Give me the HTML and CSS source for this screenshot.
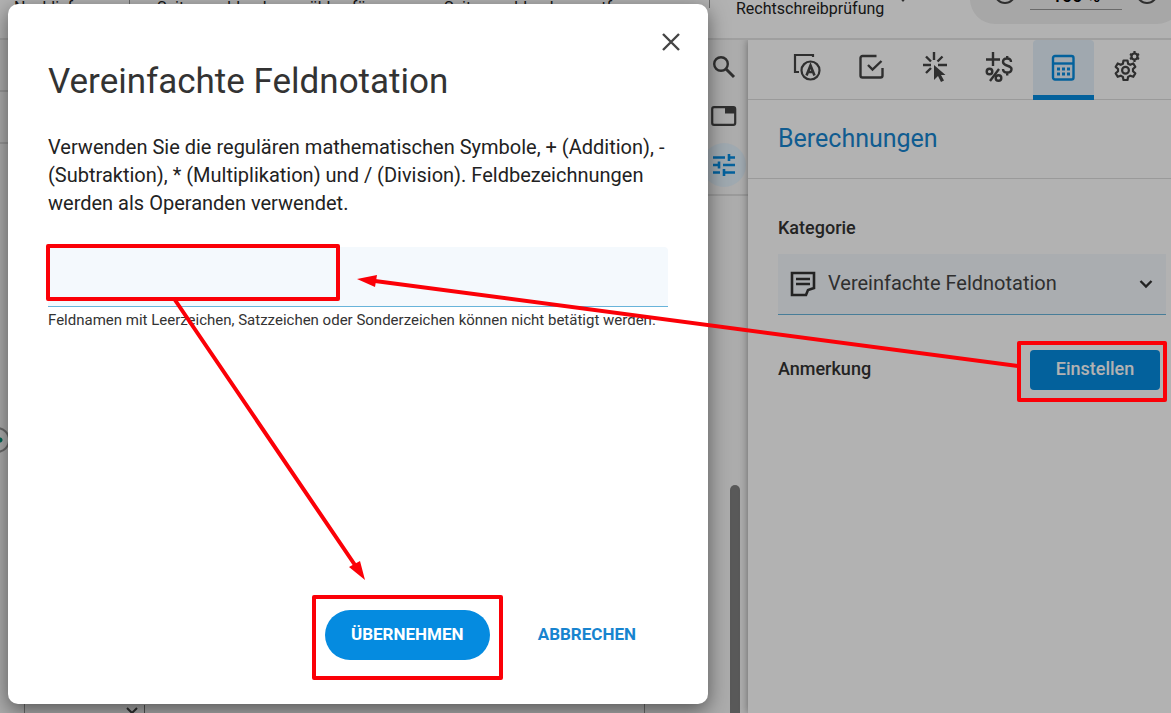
FILE: index.html
```
<!DOCTYPE html>
<html lang="de">
<head>
    <meta charset="utf-8">
    <title>Vereinfachte Feldnotation</title>
    <link rel="stylesheet" href="styles.css">
</head>
<body>
    <div class="app">
        <header class="toolbar">
            <a class="tool" href="#">Nachliefern</a>
            <span class="divider"></span>
            <a class="tool tool-wide" href="#">Seitenausblendung wählen für</a>
            <a class="tool tool-wide" href="#">Seitenausblendung entfernen</a>
            <span class="divider divider-short"></span>
            <a class="tool spelling" href="#">Rechtschreibprüfung</a>
            <svg class="caret" width="10" height="6" viewBox="0 0 10 6"><path d="M0 0h10L5 6z" fill="#444"/></svg>
            <div class="zoom">
                <button class="zoom-button" aria-label="Verkleinern"></button>
                <input class="zoom-value" type="text" value="100 %" aria-label="Zoom">
                <button class="zoom-button" aria-label="Vergrößern"></button>
            </div>
        </header>

        <div class="workspace">
            <main class="canvas">
                <div class="ruler"></div>
                <div class="ruler"></div>
                <div class="stage">
                    <span class="handle"></span>
                    <div class="sheet">
                        <div class="sheet-field">
                            <svg width="12" height="8" viewBox="0 0 12 8"><path d="M1 1l5 5 5-5" fill="none" stroke="#444" stroke-width="2"/></svg>
                        </div>
                    </div>
                </div>
            </main>

            <aside class="side">
                <nav class="rail">
                    <button class="rail-button" aria-label="Suchen">
                        <svg width="24" height="24" viewBox="0 0 24 24" fill="none" stroke="currentColor" stroke-width="2.4"><circle cx="9" cy="9" r="6.8"/><path d="M14 14l8 8" stroke-width="3"/></svg>
                    </button>
                    <button class="rail-button" aria-label="Seiten">
                        <svg width="26" height="20" viewBox="0 0 26 20"><rect x="1.2" y="1.2" width="23" height="17.6" rx="1.8" fill="none" stroke="currentColor" stroke-width="2.2"/><path d="M14 1h10v6.500H14z" fill="currentColor"/></svg>
                    </button>
                    <button class="rail-button active" aria-label="Eigenschaften">
                        <svg width="24" height="24" viewBox="0 0 24 24" fill="none" stroke="currentColor" stroke-width="2.600"><path d="M1 4.500h12M17 4.500h6M17 1v7M1 12h6M7 8.500v7M11 12h12M1 19.500h7M12 19.500h11M12 16v7"/></svg>
                    </button>
                </nav>
                <div class="scroll-thumb"></div>
            </aside>

            <section class="panel">
                <nav class="tabs">
                    <button class="tab" aria-label="Beschriftung">
                        <svg width="28" height="28" viewBox="0 0 28 28" fill="none" stroke="currentColor" stroke-width="2.200"><path d="M20 4V2H2v17h4"/><circle cx="17.500" cy="17.500" r="9"/><path d="M13.500 22.500l4-10 4 10M15 19h5" stroke-width="2.600"/></svg>
                    </button>
                    <button class="tab" aria-label="Validierung">
                        <svg width="28" height="28" viewBox="0 0 28 28" fill="none" stroke="currentColor" stroke-width="2.400"><path d="M19.500 3H5.500a2 2 0 0 0-2 2v17.500a2 2 0 0 0 2 2h18a2 2 0 0 0 2-2V15"/><path d="M11 12l4.500 4.500L24.500 8"/></svg>
                    </button>
                    <button class="tab" aria-label="Aktionen">
                        <svg width="28" height="32" viewBox="0 0 28 32" fill="none" stroke="currentColor" stroke-width="2.400"><path d="M13 1v8M2 14h8M17 14h9M5 5.500l5 5M21.500 5.500l-5 5M5 22l5-5"/><path d="M13 14l0 15 4-4 3 6 3-1.500-3-5.500h4.500z" fill="currentColor" stroke="none"/></svg>
                    </button>
                    <button class="tab" aria-label="Format">
                        <svg width="28" height="32" viewBox="0 0 28 32" fill="none" stroke="currentColor" stroke-width="2.400"><path d="M8 1v14M1 8.500h14"/><circle cx="4.500" cy="20.500" r="2.800"/><circle cx="13.500" cy="27" r="2.800"/><path d="M14 18L5 30"/><path d="M26 11c0-2.500-1.500-3.500-4-3.500s-4 1.200-4 3.500c0 4.500 8.500 3 8.500 7 0 2.200-1.700 3.500-4.200 3.500-2.800 0-4.300-1.300-4.300-3.500M22.200 5v3M22.200 21v3.500"/></svg>
                    </button>
                    <button class="tab active" aria-label="Berechnungen">
                        <svg width="24" height="28" viewBox="0 0 24 28" fill="none" stroke="currentColor" stroke-width="2.400"><rect x="2" y="2" width="20.500" height="23.500" rx="2"/><path d="M2 9.500h20"/><path d="M6 15h3M11 15h3M16 15h3M6 20h3M11 20h3M16 20h3" stroke-width="3"/></svg>
                    </button>
                    <button class="tab" aria-label="Einstellungen">
                        <svg width="28" height="32" viewBox="0 0 28 32" fill="none" stroke="currentColor" stroke-width="2.200" stroke-linejoin="round"><path d="M10.500 9.500h4l.6 3.200 2.200 1.100 3-1.300 2 3.400-2.300 2.100v2.300l2.300 2.100-2 3.400-3-1.100-2.200 1.200-.6 3.100h-4l-.6-3.100-2.200-1.200-3 1.100-2-3.400L5 20.300V18l-2.300-2.100 2-3.400 3 1.300 2.200-1.100z"/><circle cx="12.500" cy="19.200" r="3.400"/><circle cx="21.500" cy="5.500" r="3"/><path d="M21.500 0v2.500M21.500 8.500V11M17 3l2 1.200M24 6.800l2 1.200M17 8l2-1.200M24 4.200L26 3"/></svg>
                    </button>
                </nav>

                <h2 class="panel-title">Berechnungen</h2>

                <form class="panel-form">
                    <label class="label" for="category">Kategorie</label>
                    <div class="select-box">
                        <svg width="26" height="26" viewBox="0 0 26 26" fill="none" stroke="currentColor" stroke-width="2.600"><path d="M2 2h22v15l-6 2-2 5H2zM6 8h14M6 13h14"/></svg>
                        <select class="select" id="category">
                            <option>Vereinfachte Feldnotation</option>
                        </select>
                        <svg width="14" height="10" viewBox="0 0 14 10" fill="none" stroke="currentColor" stroke-width="2.400"><path d="M1.500 2L7 7.500 12.500 2"/></svg>
                    </div>
                    <div class="note-row">
                        <label class="label" for="set">Anmerkung</label>
                        <button class="set-button" id="set" type="button">Einstellen</button>
                    </div>
                </form>
            </section>
        </div>
    </div>

    <div class="backdrop"></div>

    <div class="modal" role="dialog" aria-labelledby="modal-title">
        <button class="close" aria-label="Schließen">
            <svg width="18" height="18" viewBox="0 0 18 18"><path d="M1 1l16 16M17 1L1 17" fill="none" stroke="#444" stroke-width="2.400"/></svg>
        </button>
        <h1 class="modal-title" id="modal-title">Vereinfachte Feldnotation</h1>
        <label class="modal-text" for="notation">Verwenden Sie die regulären mathematischen Symbole, + (Addition), - (Subtraktion), * (Multiplikation) und / (Division). Feldbezeichnungen werden als Operanden verwendet.</label>
        <input class="notation" id="notation" type="text">
        <p class="hint">Feldnamen mit Leerzeichen, Satzzeichen oder Sonderzeichen können nicht betätigt werden.</p>
        <div class="modal-actions">
            <button class="apply">ÜBERNEHMEN</button>
            <button class="cancel">ABBRECHEN</button>
        </div>
    </div>

    <!-- tutorial markers and arrows -->
    <svg class="marks" width="1171" height="713" viewBox="0 0 1171 713">
        <g fill="none" stroke="#fb0007" stroke-width="4" stroke-linejoin="round">
            <rect x="48" y="246" width="290" height="53"/>
            <rect x="314" y="597" width="187" height="81"/>
            <rect x="1019" y="343" width="146" height="57"/>
            <path d="M1018 366L375 281M175 300L357 568"/>
        </g>
        <path d="M357 279L377 275 375 287zM365 580L349 567 360 561z" fill="#fb0007"/>
    </svg>
</body>
</html>
```

FILE: styles.css
```
* {
    box-sizing: border-box;
}
body {
    margin: 0;
    font-family: Roboto, "Liberation Sans", sans-serif;
    font-size: 16px;
    color: #333;
    background-color: #fff;
    overflow: hidden;
}
button {
    padding: 0;
    border: none;
    background: none;
    font-family: inherit;
    color: inherit;
    cursor: pointer;
}
.app {
    display: flex;
    flex-direction: column;
    height: 100vh;
}

/* top toolbar */
.toolbar {
    display: flex;
    align-items: flex-end;
    height: 40px;
    padding: 0 0 14px 14px;
    border-bottom: 2px solid #e4e4e4;
    overflow: hidden;
}
.tool {
    flex: none;
    width: 115px;
    line-height: 24px;
    padding-bottom: 4px;
    white-space: nowrap;
    font-size: 16px;
    color: #222;
    text-decoration: none;
}
.tool-wide {
    width: 287px;
    padding-left: 27px;
}
.tool-wide + .tool-wide {
    width: 292px;
}
.divider {
    flex: none;
    width: 1px;
    height: 32px;
    background-color: #999;
}
.divider-short {
    height: 18px;
    align-self: flex-start;
    margin-top: -10px;
}
.spelling {
    width: auto;
    margin-left: 26px;
    padding: 0 0 5px;
    line-height: 20px;
}
.caret {
    align-self: flex-start;
    margin-top: -4px;
    margin-left: 14px;
}
.zoom {
    display: flex;
    flex: none;
    align-items: center;
    gap: 14px;
    width: 212px;
    height: 50px;
    margin-left: auto;
    margin-right: -11px;
    padding: 0 24px 12px;
    border-radius: 25px;
    background-color: #f0f0f0;
}
.zoom-button {
    width: 22px;
    height: 22px;
    border: 2px solid #444;
    border-radius: 50%;
}
.zoom-value {
    flex: 1;
    min-width: 0;
    height: 34px;
    padding: 6px 0 0;
    border: none;
    border-bottom: 1px solid #999;
    background: none;
    font-family: inherit;
    font-size: 18px;
    font-weight: 500;
    text-align: center;
}

/* document area */
.workspace {
    display: flex;
    flex: 1;
    min-height: 0;
    background-color: #f6f6f6;
}
.canvas {
    display: flex;
    flex-direction: column;
    flex: 1;
}
.ruler {
    height: 52px;
    border-bottom: 2px solid #d8d8d8;
}
.stage {
    display: flex;
    flex: 1;
    gap: 14px;
}
.handle {
    width: 26px;
    height: 26px;
    margin-top: 283px;
    margin-left: -16px;
    border: 2px solid #999;
    border-radius: 50%;
    background: radial-gradient(circle at 14px 11px, #00917a 2px, transparent 3px);
}
.sheet {
    display: flex;
    align-items: flex-end;
    width: 621px;
    border: solid #999;
    border-width: 0 1px;
}
.sheet-field {
    display: flex;
    justify-content: flex-end;
    width: 120px;
    height: 8px;
    padding: 2px 6px 0;
    border-right: 1px solid #777;
}
.sheet-field svg {
    flex: none;
}

/* icon rail */
.side {
    display: flex;
    flex-direction: column;
    width: 48px;
}
.rail {
    display: flex;
    flex-direction: column;
    gap: 5px;
    padding: 5px 2px 7px;
    border-bottom: 2px solid #ddd;
}
.rail-button {
    display: flex;
    justify-content: center;
    align-items: center;
    width: 44px;
    height: 44px;
    border-radius: 50%;
    color: #444;
}
.rail-button.active {
    color: #058be0;
    background-color: #e4f2fc;
}
.scroll-thumb {
    flex: 1;
    width: 10px;
    margin-top: 289px;
    margin-left: 30px;
    border-radius: 5px 5px 0 0;
    background-color: #808080;
}

/* properties panel */
.panel {
    width: 423px;
    background-color: #fff;
    box-shadow: 0 0 8px rgba(0, 0, 0, 0.4);
    clip-path: inset(0 0 0 -10px);
}
.tabs {
    display: flex;
    gap: 3px;
    height: 60px;
    padding-left: 29px;
    border-bottom: 1px solid #ddd;
}
.tab {
    display: flex;
    flex: none;
    justify-content: center;
    align-items: center;
    width: 61px;
    height: 60px;
    padding: 0 1px 6px 0;
    color: #444;
}
.tab.active {
    padding-bottom: 0;
    border-bottom: 5px solid #058be0;
    border-radius: 4px 4px 0 0;
    color: #058be0;
    background-color: #e5f1fb;
}
.panel-title {
    margin: 0;
    padding: 24px 30px;
    border-bottom: 1px solid #ddd;
    font-size: 25px;
    font-weight: 400;
    line-height: 30px;
    color: #1784cf;
}
.panel-form {
    padding: 36px 5px 0 30px;
}
.label {
    display: block;
    font-size: 18px;
    font-weight: 500;
    line-height: 26px;
}
.select-box {
    display: flex;
    align-items: center;
    gap: 12px;
    height: 61px;
    margin-top: 13px;
    padding: 0 13px 0 12px;
    border-bottom: 1px solid #68b4da;
    background-color: #f4f8fd;
}
.select {
    flex: 1;
    min-width: 0;
    padding: 0 0 2px;
    border: none;
    appearance: none;
    background: none;
    font-family: inherit;
    font-size: 20px;
    color: #444;
}
.note-row {
    display: flex;
    justify-content: space-between;
    align-items: center;
    margin-top: 35px;
    padding-right: 6px;
}
.note-row .label {
    padding-bottom: 2px;
}
.set-button {
    width: 130px;
    height: 40px;
    padding-bottom: 3px;
    border-radius: 4px;
    font-size: 18px;
    font-weight: 500;
    color: #fff;
    background-color: #058be0;
}

/* dialog */
.backdrop {
    position: absolute;
    inset: 0;
    background-color: rgba(0, 0, 0, 0.3);
}
.modal {
    position: absolute;
    top: 4px;
    left: 8px;
    display: flex;
    flex-direction: column;
    width: 700px;
    height: calc(100vh - 13px);
    padding: 57px 40px 44px;
    border-radius: 10px;
    background-color: #fff;
    box-shadow: 0 6px 20px rgba(0, 0, 0, 0.5);
}
.close {
    position: absolute;
    top: 23px;
    right: 22px;
    display: flex;
    justify-content: center;
    align-items: center;
    width: 30px;
    height: 30px;
}
.modal-title {
    margin: 0;
    font-size: 35px;
    font-weight: 400;
    line-height: 42px;
}
.modal-text {
    margin-top: 30px;
    font-size: 20px;
    line-height: 28px;
    color: #222;
}
.notation {
    width: 100%;
    height: 60px;
    margin-top: 30px;
    padding: 0 16px;
    border: none;
    border-bottom: 1px solid #68b4da;
    border-radius: 4px 4px 0 0;
    background-color: #f4f9fd;
    font-family: inherit;
    font-size: 20px;
}
.hint {
    margin: 3px 0 0;
    font-size: 15px;
    line-height: 20px;
}
.modal-actions {
    display: flex;
    justify-content: flex-end;
    gap: 16px;
    margin-top: auto;
}
.apply,
.cancel {
    height: 50px;
    padding: 0 24px 2px;
    border-radius: 25px;
    font-size: 17px;
    font-weight: 700;
}
.apply {
    width: 165px;
    color: #fff;
    background-color: #058be0;
}
.cancel {
    padding: 0 32px 2px;
    color: #1784cf;
}

.marks {
    position: absolute;
    top: 0;
    left: 0;
    pointer-events: none;
}
```
